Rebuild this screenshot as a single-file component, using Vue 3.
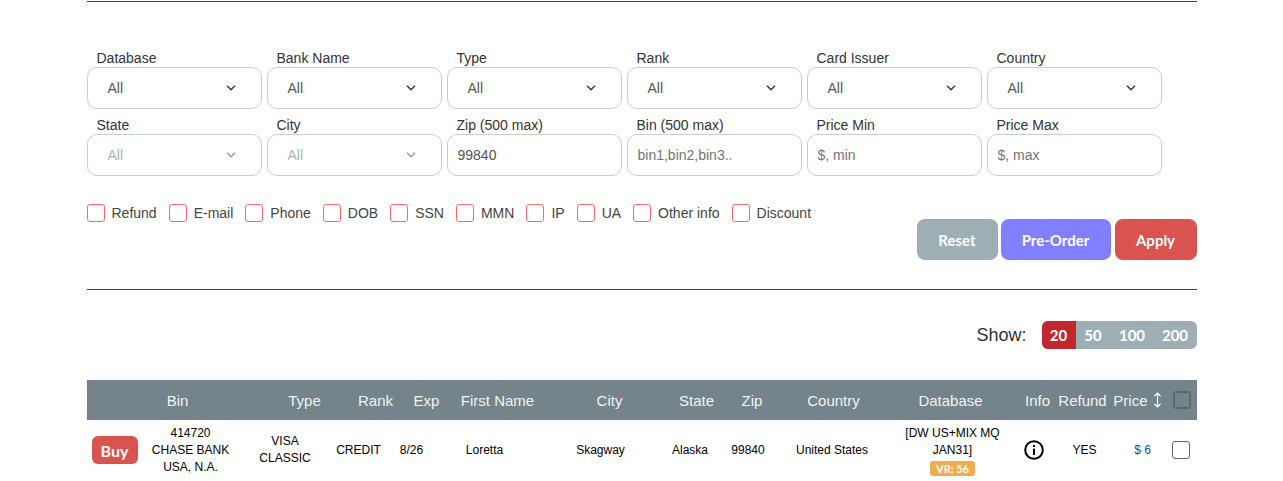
<template>
  <div class="page">
    <hr class="rule" />

    <!-- filters -->
    <div class="filters">
      <div v-for="f in fields" :key="f.label" class="field">
        <label>{{ f.label }}</label>
        <div v-if="f.select" class="select" :class="{ disabled: f.disabled }">
          <span>All</span>
          <svg width="10" height="6" viewBox="0 0 10 6"><polyline points="1,0.8 5,4.8 9,0.8" /></svg>
        </div>
        <input v-else class="text-input" :value="f.value" :placeholder="f.placeholder" />
      </div>
    </div>

    <div class="actions-row">
      <div class="checks">
        <label v-for="c in checks" :key="c" class="check">
          <span class="box"></span>
          {{ c }}
        </label>
      </div>
      <div class="buttons">
        <button class="btn reset">Reset</button>
        <button class="btn preorder">Pre-Order</button>
        <button class="btn apply">Apply</button>
      </div>
    </div>

    <hr class="rule second" />

    <div class="show-row">
      <span class="show-label">Show:</span>
      <div class="show-group">
        <span v-for="s in sizes" :key="s.n" :class="{ active: s.n === 20 }" :style="{ width: s.w + 'px' }">{{ s.n }}</span>
      </div>
    </div>

    <!-- table -->
    <div class="thead">
      <div></div>
      <div v-for="h in headers" :key="h">{{ h }}</div>
      <div class="price-head">
        Price
        <svg width="9" height="16" viewBox="0 0 9 16">
          <path d="M4.5 1v14M1.5 4l3-3 3 3M1.5 12l3 3 3-3" />
        </svg>
      </div>
      <div class="head-check"><span></span></div>
    </div>

    <div class="trow">
      <div><button class="buy">Buy</button></div>
      <div>414720<br />CHASE BANK<br />USA, N.A.</div>
      <div>VISA<br />CLASSIC</div>
      <div>CREDIT</div>
      <div>8/26</div>
      <div>Loretta</div>
      <div>Skagway</div>
      <div>Alaska</div>
      <div>99840</div>
      <div>United States</div>
      <div class="db">
        [DW US+MIX MQ JAN31]
        <span class="badge">VR: 56</span>
      </div>
      <div class="info">
        <svg width="20" height="20" viewBox="0 0 20 20">
          <circle cx="10" cy="10" r="8.8" />
          <rect x="9" y="8.6" width="2" height="6.4" />
          <rect x="9" y="5" width="2" height="2" />
        </svg>
      </div>
      <div>YES</div>
      <div class="price">$ 6</div>
      <div class="row-check"><span></span></div>
    </div>
  </div>
</template>

<script setup>
const fields = [
  { label: "Database", select: true },
  { label: "Bank Name", select: true },
  { label: "Type", select: true },
  { label: "Rank", select: true },
  { label: "Card Issuer", select: true },
  { label: "Country", select: true },
  { label: "State", select: true, disabled: true },
  { label: "City", select: true, disabled: true },
  { label: "Zip (500 max)", value: "99840" },
  { label: "Bin (500 max)", placeholder: "bin1,bin2,bin3.." },
  { label: "Price Min", placeholder: "$, min" },
  { label: "Price Max", placeholder: "$, max" },
];

const checks = ["Refund", "E-mail", "Phone", "DOB", "SSN", "MMN", "IP", "UA", "Other info", "Discount"];

const sizes = [
  { n: 20, w: 34 },
  { n: 50, w: 35 },
  { n: 100, w: 43 },
  { n: 200, w: 43 },
];

const headers = ["Bin", "Type", "Rank", "Exp", "First Name", "City", "State", "Zip", "Country", "Database", "Info", "Refund"];
</script>

<style>
body {
  overflow: hidden;
}
</style>

<style scoped>
.page {
  width: 1110px;
  margin: 0 auto;
  padding-top: 1px;
  font-family: "Liberation Sans", Arial, sans-serif;
  color: #333;
}

.rule {
  margin: 0;
  border: none;
  height: 1px;
  background: #e00000;
}

.rule.second {
  margin-top: 29px;
}

/* filter fields */
.filters {
  display: grid;
  grid-template-columns: repeat(6, 175px);
  column-gap: 5px;
  row-gap: 7px;
  margin-top: 47px;
}

.field label {
  display: block;
  height: 18px;
  line-height: 18px;
  padding-left: 10px;
  font-size: 14px;
  color: #333;
}

.select,
.text-input {
  box-sizing: border-box;
  width: 175px;
  height: 42px;
  border: 1px solid #ccc;
  border-radius: 10px;
  background: #fff;
  font-family: inherit;
  font-size: 14px;
  color: #555;
}

.select {
  display: flex;
  align-items: center;
  justify-content: space-between;
  padding: 0 25px 0 20px;
}

.select svg {
  fill: none;
  stroke: #333;
  stroke-width: 1.4;
}

.select.disabled {
  color: #a9b2b8;
}

.select.disabled svg {
  stroke: #999;
}

.text-input {
  padding: 0 10px;
  outline: none;
}

.text-input::placeholder {
  color: #757575;
  opacity: 1;
}

/* checkboxes + buttons */
.actions-row {
  display: flex;
  justify-content: space-between;
  margin-top: 28px;
}

.checks {
  display: flex;
  gap: 12px;
  height: 18px;
}

.check {
  display: flex;
  align-items: center;
  gap: 7px;
  font-size: 14px;
  color: #444;
}

.box {
  box-sizing: border-box;
  width: 18px;
  height: 18px;
  border: 1px solid #f66;
  border-radius: 3px;
}

.buttons {
  display: flex;
  margin-top: 15px;
}

.btn {
  height: 41px;
  border: none;
  border-radius: 8px;
  color: #fff;
  font-family: "Lato", sans-serif;
  font-size: 15px;
  font-weight: 700;
  padding: 0;
}

.reset {
  width: 81px;
  background: #9dafb4;
}

.preorder {
  width: 110px;
  margin-left: 3px;
  background: #7f7fff;
}

.apply {
  width: 82px;
  margin-left: 4px;
  background: #d9534f;
}

/* page size */
.show-row {
  display: flex;
  justify-content: flex-end;
  align-items: center;
  margin-top: 31px;
}

.show-label {
  font-size: 18px;
  margin-right: 15px;
}

.show-group {
  display: flex;
  height: 28px;
  border-radius: 6px;
  overflow: hidden;
  background: #9dafb4;
}

.show-group span {
  display: flex;
  align-items: center;
  justify-content: center;
  color: #fff;
  font-family: "Lato", sans-serif;
  font-size: 15px;
  font-weight: 700;
}

.show-group .active {
  background: #c1272d;
}

/* table */
.thead {
  display: grid;
  grid-template-columns: 9px 164px 90px 52px 50px 92px 132px 42px 69px 94px 140px 34px 56px 56px 30px;
  align-items: center;
  height: 40px;
  margin-top: 31px;
  background: #74848a;
  color: #f0f3f4;
  font-size: 15px;
  text-align: center;
}

.price-head {
  display: flex;
  align-items: center;
  justify-content: flex-end;
  gap: 5px;
  padding-right: 5px;
}

.price-head svg {
  fill: none;
  stroke: #fff;
  stroke-width: 1.2;
}

.head-check {
  display: flex;
  justify-content: flex-end;
  padding-right: 6px;
}

.head-check span {
  box-sizing: border-box;
  width: 18px;
  height: 18px;
  border: 2px solid #5c686c;
  border-radius: 3px;
}

.trow {
  display: grid;
  grid-template-columns: 51px 106px 83px 64px 42px 104px 128px 51px 65px 103px 138px 24px 78px 38px 35px;
  align-items: center;
  height: 60px;
  color: #000;
  font-size: 12px;
  line-height: 17px;
  text-align: center;
}

.buy {
  display: block;
  width: 46px;
  height: 28px;
  margin-left: 5px;
  padding: 0;
  border: none;
  border-radius: 6px;
  background: #d9534f;
  color: #fff;
  font-family: "Lato", sans-serif;
  font-size: 16px;
  font-weight: 700;
}

.db {
  padding: 0 15px;
}

.badge {
  display: block;
  width: 45px;
  height: 15px;
  margin: 2px auto 0;
  border-radius: 3px;
  background: #f0ad4e;
  color: #fff;
  font-family: "Lato", sans-serif;
  font-size: 11px;
  font-weight: 700;
  line-height: 15px;
}

.info {
  display: flex;
  justify-content: center;
}

.info circle {
  fill: none;
  stroke: #000;
  stroke-width: 2;
}

.price {
  color: #0b5394;
}

.row-check {
  display: flex;
  justify-content: flex-end;
  padding-right: 7px;
}

.row-check span {
  box-sizing: border-box;
  width: 18px;
  height: 18px;
  border: 1.5px solid #666;
  border-radius: 3px;
  background: #fff;
}
</style>
